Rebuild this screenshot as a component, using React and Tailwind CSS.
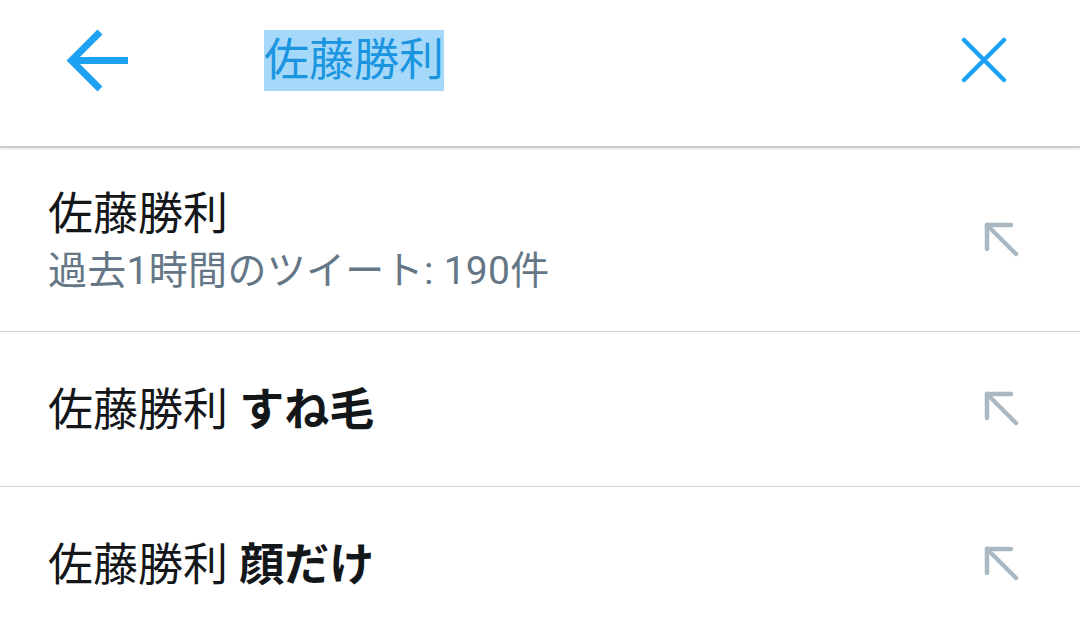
import React from 'react';

const font = { fontFamily: 'Roboto, "Noto Sans CJK JP", "Noto Sans", sans-serif' };

const BackArrow = () => (
  <svg className="w-[70px] h-[72px]" viewBox="60 25 70 72" fill="none" stroke="#1da1f2" strokeWidth={7}>
    <path d="M128 61.5 H72" />
    <path d="M100 33 L71.5 61.5 L100 90" strokeLinejoin="miter" />
  </svg>
);

const CloseIcon = () => (
  <svg className="w-[48px] h-[48px]" viewBox="0 0 48 48" fill="none" stroke="#1da1f2" strokeWidth={4.5} strokeLinecap="round">
    <path d="M4 4 L44 44 M44 4 L4 44" />
  </svg>
);

const FillArrow = () => (
  <svg className="w-[36px] h-[36px]" viewBox="0 0 36 36" fill="none" stroke="#aab8c2" strokeWidth={4.5} strokeLinecap="round" strokeLinejoin="round">
    <path d="M3 27 V3 H27" />
    <path d="M3 3 L32 32" />
  </svg>
);

const suggestions = [
  { base: '佐藤勝利', bold: 'すね毛' },
  { base: '佐藤勝利', bold: '顔だけ' },
];

export default function App() {
  return (
    <div className="w-[1080px] h-[640px] overflow-hidden bg-white" style={font}>
      <header className="h-[148px] flex items-center pb-[26px] border-b-[2px] border-[#cfcfcf] shadow-[0_1px_2px_rgba(0,0,0,0.12)] relative z-10">
        <div className="ml-[60px]">
          <BackArrow />
        </div>
        <div className="ml-[134px] flex-1">
          <span className="bg-[#a6d9f9] text-[#1b95e0] text-[45px] leading-[61px] inline-block">佐藤勝利</span>
        </div>
        <div className="mr-[72px]">
          <CloseIcon />
        </div>
      </header>

      <div className="h-[184px] flex items-center border-b border-[#ccd6dd] pl-[48px] pr-[60px]">
        <div className="flex-1 flex flex-col pt-[4px]">
          <div className="text-[#14171a] text-[45px] leading-[56px]">佐藤勝利</div>
          <div className="text-[#657786] text-[39px] leading-[52px] mt-[2px] tracking-[0.3px]">過去1時間のツイート: 190件</div>
        </div>
        <FillArrow />
      </div>

      {suggestions.map((s, i) => (
        <div key={i} className="h-[155px] flex items-center border-b border-[#ccd6dd] pl-[48px] pr-[60px]">
          <div className="flex-1 text-[#14171a] text-[45px] leading-[56px] pt-[4px]">
            {s.base} <span className="font-bold">{s.bold}</span>
          </div>
          <FillArrow />
        </div>
      ))}
    </div>
  );
}
